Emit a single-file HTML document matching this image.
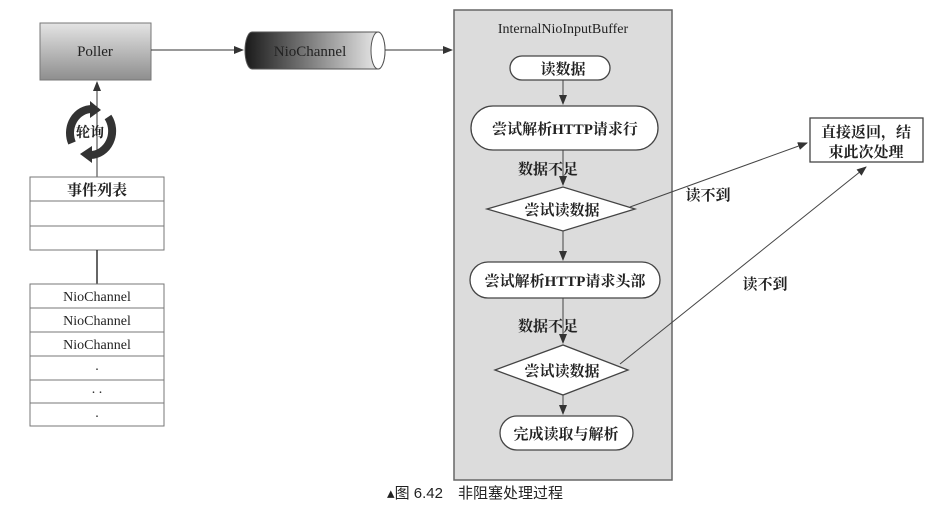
<!DOCTYPE html>
<html><head><meta charset="utf-8"><style>
body{margin:0;background:#fff}
svg text{font-family:"Liberation Serif","Noto Serif CJK SC",serif;fill:#222}
.b{font-weight:bold}
</style></head><body>
<svg width="951" height="522" viewBox="0 0 951 522" xmlns="http://www.w3.org/2000/svg">
<defs>
<linearGradient id="pg" x1="0" y1="0" x2="0" y2="1"><stop offset="0" stop-color="#e4e4e4"/><stop offset="1" stop-color="#8e8e8e"/></linearGradient>
<linearGradient id="cg" x1="0" y1="0" x2="1" y2="0"><stop offset="0" stop-color="#1a1a1a"/><stop offset="1" stop-color="#f2f2f2"/></linearGradient>
<marker id="ar" markerWidth="10" markerHeight="8" refX="9" refY="4" orient="auto" markerUnits="userSpaceOnUse"><path d="M0,0 L10,4 L0,8 z" fill="#333"/></marker>
</defs>
<rect width="951" height="522" fill="#fff"/>
<rect x="40" y="23" width="111" height="57" fill="url(#pg)" stroke="#777"/>
<text x="95" y="56" font-size="15" text-anchor="middle">Poller</text>
<line x1="151" y1="50" x2="243" y2="50" stroke="#333" marker-end="url(#ar)"/>
<path d="M252,32 L378,32 A7,18.5 0 0 1 378,69 L252,69 A7,18.5 0 0 1 252,32 z" fill="url(#cg)" stroke="#555"/>
<ellipse cx="378" cy="50.5" rx="7" ry="18.5" fill="#fff" stroke="#555"/>
<text x="310" y="56" font-size="15" text-anchor="middle" fill="#555">NioChannel</text>
<line x1="385" y1="50" x2="452" y2="50" stroke="#333" marker-end="url(#ar)"/>
<!-- rotate icon -->
<path d="M72,143 A22,24 0 0 1 92,109" fill="none" stroke="#333" stroke-width="8"/>
<path d="M90,101 L101,110 L90,118 z" fill="#333"/>
<path d="M108,117 A22,24 0 0 1 90,155" fill="none" stroke="#333" stroke-width="8"/>
<path d="M92,146 L80,154 L92,163 z" fill="#333"/>
<text x="90" y="137" font-size="14" text-anchor="middle" class="b">轮询</text>
<line x1="97" y1="177" x2="97" y2="82" stroke="#333" marker-end="url(#ar)"/>
<rect x="30" y="177" width="134" height="73" fill="#fff" stroke="#777"/>
<line x1="30" y1="201" x2="164" y2="201" stroke="#777"/>
<line x1="30" y1="226" x2="164" y2="226" stroke="#777"/>
<text x="97" y="195" font-size="15" text-anchor="middle" class="b">事件列表</text>
<line x1="97" y1="250" x2="97" y2="284" stroke="#333" stroke-width="1.5"/>
<rect x="30" y="284" width="134" height="142" fill="#fff" stroke="#777"/>
<g stroke="#777"><line x1="30" y1="308" x2="164" y2="308"/><line x1="30" y1="332" x2="164" y2="332"/><line x1="30" y1="356" x2="164" y2="356"/><line x1="30" y1="380" x2="164" y2="380"/><line x1="30" y1="403" x2="164" y2="403"/></g>
<g font-size="14" text-anchor="middle"><text x="97" y="301">NioChannel</text><text x="97" y="325">NioChannel</text><text x="97" y="349">NioChannel</text><text x="97" y="370">.</text><text x="97" y="393">. .</text><text x="97" y="417">.</text></g>
<rect x="454" y="10" width="218" height="470" fill="#dcdcdc" stroke="#666" stroke-width="1.5"/>
<text x="563" y="33" font-size="14" text-anchor="middle" fill="#444">InternalNioInputBuffer</text>
<g stroke="#444" fill="#fff" stroke-width="1.3">
<rect x="510" y="56" width="100" height="24" rx="12"/>
<rect x="471" y="106" width="187" height="44" rx="22"/>
<path d="M487,209 L563,187 L635,209 L563,231 z"/>
<rect x="470" y="262" width="190" height="36" rx="18"/>
<path d="M495,370 L563,345 L628,370 L563,395 z"/>
<rect x="500" y="416" width="133" height="34" rx="17"/>
</g>
<g stroke="#444" fill="none">
<line x1="563" y1="80" x2="563" y2="104" marker-end="url(#ar)"/>
<line x1="563" y1="150" x2="563" y2="185" marker-end="url(#ar)"/>
<line x1="563" y1="231" x2="563" y2="260" marker-end="url(#ar)"/>
<line x1="563" y1="298" x2="563" y2="343" marker-end="url(#ar)"/>
<line x1="563" y1="395" x2="563" y2="414" marker-end="url(#ar)"/>
<line x1="630" y1="207" x2="807" y2="143" marker-end="url(#ar)"/>
<line x1="620" y1="364" x2="866" y2="167" marker-end="url(#ar)"/>
</g>
<g font-size="15" text-anchor="middle" class="b">
<text x="563" y="74">读数据</text>
<text x="565" y="134">尝试解析HTTP请求行</text>
<text x="548" y="174">数据不足</text>
<text x="562" y="215">尝试读数据</text>
<text x="565" y="286">尝试解析HTTP请求头部</text>
<text x="548" y="331">数据不足</text>
<text x="562" y="376">尝试读数据</text>
<text x="566" y="439">完成读取与解析</text>
<text x="708" y="200">读不到</text>
<text x="765" y="289">读不到</text>
</g>
<rect x="810" y="118" width="113" height="44" fill="#fff" stroke="#444" stroke-width="1.3"/>
<text x="866" y="137" font-size="15" text-anchor="middle" class="b">直接返回，结</text>
<text x="866" y="157" font-size="15" text-anchor="middle" class="b">束此次处理</text>
<text x="475" y="498" font-size="15" text-anchor="middle" style="font-family:'Liberation Sans','Noto Sans CJK SC',sans-serif" fill="#333">▴图 6.42　非阻塞处理过程</text>
</svg>
</body></html>
